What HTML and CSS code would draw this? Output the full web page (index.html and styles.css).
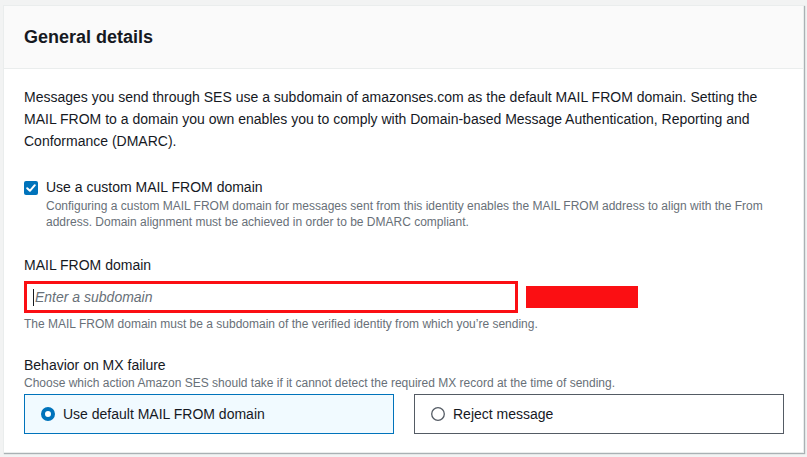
FILE: index.html
```html
<!DOCTYPE html>
<html lang="en">
<head>
<meta charset="utf-8">
<title>General details</title>
<link rel="stylesheet" href="styles.css">
</head>
<body>
<div class="card">
  <div class="card-header"><h2 class="title">General details</h2></div>
  <div class="card-body">
    <p class="intro">Messages you send through SES use a subdomain of amazonses.com as the default MAIL FROM domain. Setting the MAIL FROM to a domain you own enables you to comply with Domain-based Message Authentication, Reporting and Conformance (DMARC).</p>

    <div class="check-row">
      <svg class="check-box" width="14" height="14" viewBox="0 0 14 14"><rect x="0" y="0" width="14" height="14" rx="2" fill="#0073bb"/><path d="M3.2 7.2 L5.9 9.8 L10.8 4.2" fill="none" stroke="#fff" stroke-width="2" stroke-linecap="round" stroke-linejoin="round"/></svg>
      <div class="check-text">
        <div class="check-label">Use a custom MAIL FROM domain</div>
        <div class="check-desc">Configuring a custom MAIL FROM domain for messages sent from this identity enables the MAIL FROM address to align with the From address. Domain alignment must be achieved in order to be DMARC compliant.</div>
      </div>
    </div>

    <div class="field field-domain">
      <div class="field-label">MAIL FROM domain</div>
      <div class="input-row">
        <div class="input"><span class="caret"></span><span class="placeholder">Enter a subdomain</span></div>
        <div class="redact"></div>
      </div>
      <div class="hint hint-after">The MAIL FROM domain must be a subdomain of the verified identity from which you’re sending.</div>
    </div>

    <div class="field field-mx">
      <div class="field-label tight">Behavior on MX failure</div>
      <div class="hint">Choose which action Amazon SES should take if it cannot detect the required MX record at the time of sending.</div>
      <div class="tiles">
        <div class="tile selected">
          <svg class="radio" width="14" height="14" viewBox="0 0 14 14"><circle cx="7" cy="7" r="5" fill="#fff" stroke="#0073bb" stroke-width="4"/></svg>
          <span class="tile-label">Use default MAIL FROM domain</span>
        </div>
        <div class="tile">
          <svg class="radio" width="14" height="14" viewBox="0 0 14 14"><circle cx="7" cy="7" r="6.3" fill="#fff" stroke="#545b64" stroke-width="1.3"/></svg>
          <span class="tile-label">Reject message</span>
        </div>
      </div>
    </div>
  </div>
</div>
</body>
</html>
```

FILE: styles.css
```css
html, body {
  margin: 0;
  padding: 0;
}
body {
  background: #f2f3f3;
  font-family: "Liberation Sans", Arial, sans-serif;
  color: #16191f;
  width: 807px;
  height: 457px;
  overflow: hidden;
}
.card {
  box-sizing: border-box;
  width: 801px;
  margin: 5px 0 0 3px;
  background: #fff;
  border: 1px solid #eaeded;
  box-shadow: 1px 1px 1px 0 rgba(0, 28, 36, 0.3);
}
.card-header {
  background: #fafafa;
  border-bottom: 1px solid #eaeded;
  padding: 20px 20px 20px 20px;
}
.title {
  margin: 0;
  font-size: 18px;
  line-height: 22px;
  font-weight: 700;
}
.card-body {
  padding: 17px 19px 18px 20px;
}
.intro {
  margin: 0;
  font-size: 14px;
  line-height: 22px;
}
.check-row {
  display: flex;
  gap: 8px;
  margin-top: 25px;
}
.check-box {
  flex: none;
  margin-top: 4px;
}
.check-label {
  font-size: 14px;
  line-height: 21px;
}
.check-desc {
  font-size: 12px;
  line-height: 16px;
  color: #687078;
}
.field-domain {
  margin-top: 24px;
}
.field-label {
  font-size: 14px;
  line-height: 22px;
  margin-bottom: 5px;
}
.field-label.tight {
  line-height: 20px;
  margin-bottom: 0;
}
.input-row {
  display: flex;
  align-items: center;
}
.input {
  box-sizing: border-box;
  width: 494px;
  height: 32px;
  border: 3px solid #fb0f13;
  display: flex;
  align-items: center;
  padding-left: 6px;
}
.caret {
  width: 1px;
  height: 17px;
  background: #16191f;
  margin-right: 1px;
}
.placeholder {
  font-size: 14px;
  font-style: italic;
  color: #687078;
}
.redact {
  width: 112px;
  height: 22px;
  background: #fb0f13;
  margin-left: 8px;
}
.hint {
  font-size: 12px;
  line-height: 16px;
  color: #687078;
}
.hint-after {
  margin-top: 3px;
}
.field-mx {
  margin-top: 23px;
}
.tiles {
  display: grid;
  grid-template-columns: 370px 370px;
  column-gap: 20px;
  margin-top: 3px;
}
.tile {
  box-sizing: border-box;
  height: 40px;
  border: 1px solid #545b64;
  display: flex;
  align-items: center;
  padding-left: 16px;
  gap: 8px;
}
.tile.selected {
  background: #f1faff;
  border-color: #0073bb;
}
.radio {
  flex: none;
}
.tile-label {
  font-size: 14px;
  line-height: 22px;
}
```
